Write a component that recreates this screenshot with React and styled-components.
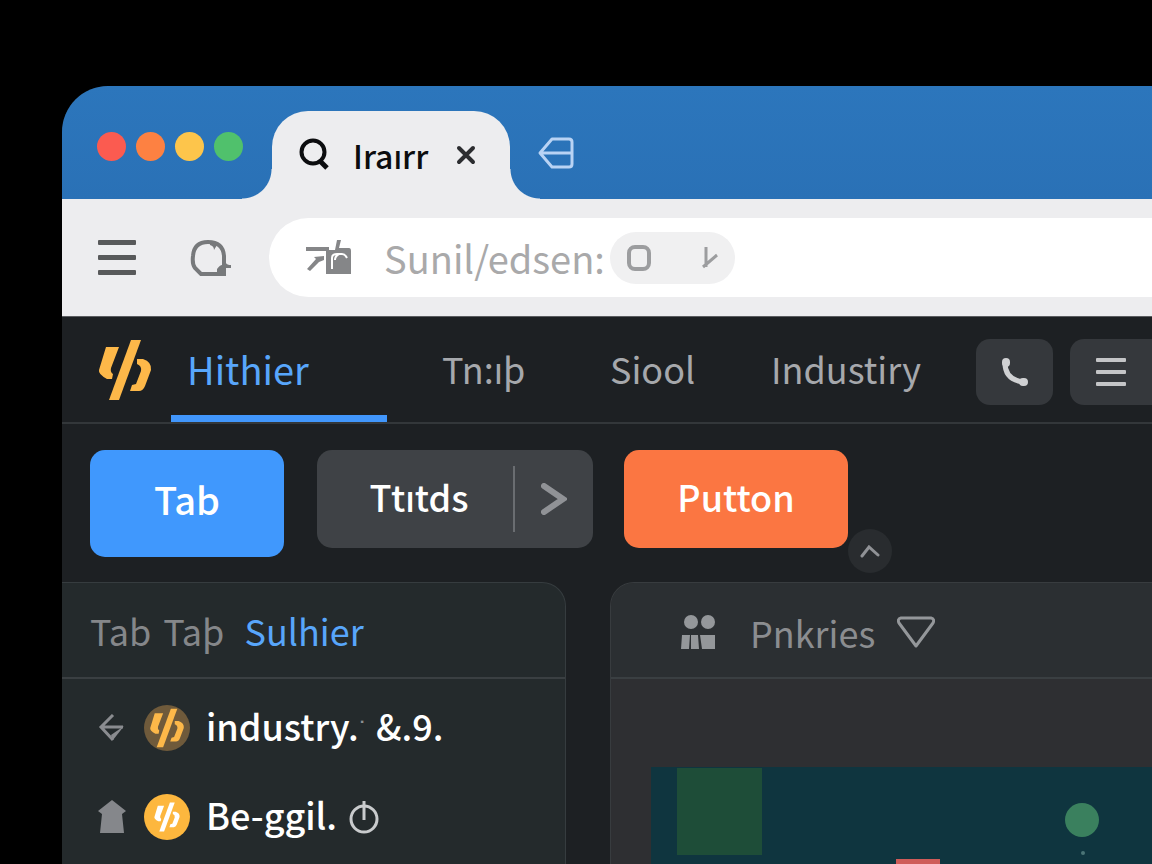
import React from "react";
import styled, { createGlobalStyle } from "styled-components";

const GlobalStyle = createGlobalStyle`
  * {
    box-sizing: border-box;
  }
  body {
    margin: 0;
    background: #000;
    font-family: "Noto Sans CJK JP", "Noto Sans", sans-serif;
    overflow-x: hidden;
  }
  button, input, a {
    font-family: inherit;
    color: inherit;
  }
  button {
    border: 0;
    padding: 0;
    background: none;
    cursor: pointer;
  }
  a {
    text-decoration: none;
  }
  svg {
    display: block;
    flex-shrink: 0;
  }
`;

const Page = styled.div`
  display: flex;
  min-height: 100vh;
  padding: 86px 0 0 62px;
  background: #000;
`;
const Window = styled.div`
  display: flex;
  flex: 1;
  flex-direction: column;
  min-width: 0;
  overflow: hidden;
  border-top-left-radius: 46px;
  background: #1d2023;
`;

/* title bar */
const TitleBar = styled.header`
  display: flex;
  align-items: center;
  height: 113px;
  padding: 25px 0 0 35px;
  background: linear-gradient(#2c76bc, #2a71b6);
`;
const Lights = styled.div`
  display: flex;
  gap: 10px;
  padding-bottom: 18px;
  margin-right: 29px;
`;
const Light = styled.span`
  width: 29px;
  height: 29px;
  border-radius: 50%;
  background: ${(props) => props.$color};
`;
const BrowserTab = styled.div`
  position: relative;
  display: flex;
  align-items: center;
  align-self: stretch;
  width: 238px;
  padding-left: 27px;
  border-radius: 36px 36px 0 0;
  background: #ededef;
  color: #0c0d0f;
  &::before,
  &::after {
    content: "";
    position: absolute;
    bottom: 0;
    width: 30px;
    height: 30px;
  }
  &::before {
    right: 100%;
    background: radial-gradient(circle at 0 0, transparent 29px, #ededef 30px);
  }
  &::after {
    left: 100%;
    background: radial-gradient(circle at 100% 0, transparent 29px, #ededef 30px);
  }
`;
const TabTitle = styled.span`
  width: 126px;
  padding-left: 23px;
  font-size: 32px;
  font-weight: 500;
  line-height: 40px;
`;
const NewTab = styled.button`
  margin-left: 28px;
  padding-bottom: 4px;
`;

/* address row */
const AddressRow = styled.div`
  display: flex;
  align-items: center;
  height: 118px;
  padding-left: 36px;
  border-bottom: 1px solid #5b5d60;
  background: #ededef;
`;
const ReloadButton = styled.button`
  margin: 0 38px 0 54px;
`;
const AddressBar = styled.div`
  display: flex;
  flex: 1;
  align-items: center;
  min-width: 0;
  height: 79px;
  padding-left: 37px;
  border-radius: 40px 0 0 40px;
  background: #fff;
`;
const AddressInput = styled.input`
  width: 226px;
  height: 60px;
  padding: 0;
  margin-left: 32px;
  border: 0;
  outline: 0;
  background: none;
  color: #a9a9aa;
  font-size: 38px;
`;
const Chip = styled.div`
  display: flex;
  align-items: center;
  justify-content: space-between;
  width: 125px;
  height: 52px;
  padding: 0 17px;
  border-radius: 26px;
  background: #f0f0f1;
`;

/* main navigation */
const NavBar = styled.nav`
  display: flex;
  align-items: center;
  height: 107px;
  padding-left: 36px;
  border-bottom: 2px solid #33373a;
  background: #1d2023;
`;
const NavLink = styled.a`
  display: flex;
  align-items: center;
  align-self: stretch;
  width: ${(props) => props.$width}px;
  padding: 4px 0 0 16px;
  margin: ${(props) => (props.$active ? "0 39px 0 19px" : 0)};
  border-bottom: 7px solid ${(props) => (props.$active ? "#4196fb" : "transparent")};
  color: ${(props) => (props.$active ? "#58a6fb" : "#a6a8ac")};
  font-size: ${(props) => (props.$active ? 38 : 36)}px;
  white-space: nowrap;
`;
const NavTools = styled.div`
  display: flex;
  gap: 17px;
  padding-top: 4px;
  margin-left: auto;
`;
const ToolButton = styled.button`
  display: flex;
  align-items: center;
  justify-content: center;
  width: ${(props) => (props.$edge ? 82 : 77)}px;
  height: 66px;
  border-radius: ${(props) => (props.$edge ? "14px 0 0 14px" : "14px")};
  background: #35383c;
`;

/* actions */
const Actions = styled.div`
  display: flex;
  align-items: flex-start;
  height: 158px;
  padding: 26px 0 0 28px;
`;
const Button = styled.button`
  width: ${(props) => props.$width}px;
  height: ${(props) => (props.$tall ? 107 : 98)}px;
  padding-bottom: ${(props) => (props.$tall ? 10 : 6)}px;
  border-radius: 15px;
  background: ${(props) => props.$color};
  color: #fff;
  font-size: ${(props) => (props.$tall ? 38 : 36)}px;
  font-weight: 500;
`;
const SplitButton = styled.div`
  display: flex;
  align-items: center;
  padding-left: 8px;
  margin: 0 31px 0 33px;
  border-radius: 15px;
  background: #3f4246;
`;
const SplitToggle = styled.button`
  display: flex;
  align-items: center;
  justify-content: center;
  width: 80px;
  height: 66px;
  border-left: 2px solid #6a6d71;
`;
const ButtonWrap = styled.div`
  position: relative;
`;
const ScrollUp = styled.button`
  position: absolute;
  right: -44px;
  bottom: -25px;
  display: flex;
  align-items: center;
  justify-content: center;
  width: 44px;
  height: 44px;
  border-radius: 50%;
  background: #292c2f;
`;

/* panels */
const Panels = styled.main`
  display: flex;
  flex: 1;
  gap: 44px;
`;
const SidePanel = styled.section`
  width: 504px;
  border: 1px solid #363c3f;
  border-width: 1px 1px 0 0;
  border-top-right-radius: 24px;
  background: #242a2c;
`;
const MainPanel = styled.section`
  display: flex;
  flex: 1;
  flex-direction: column;
  min-width: 0;
  border: 1px solid #383c3f;
  border-width: 1px 0 0 1px;
  border-top-left-radius: 24px;
  background: #2e2f32;
  overflow: hidden;
`;
const PanelHeader = styled.div`
  display: flex;
  align-items: center;
  height: 96px;
  padding: ${(props) => (props.$wide ? "4px 0 0 70px" : "0 0 0 28px")};
  border-bottom: 2px solid #3a3f42;
  background: ${(props) => (props.$wide ? "#2b2f32" : "none")};
  font-size: 36px;
  line-height: 48px;
`;
const HeaderLink = styled.a`
  margin-right: ${(props) => props.$gap || 0}px;
  color: ${(props) => (props.$active ? "#58a6fb" : "#85878a")};
`;
const HeaderTitle = styled.h2`
  width: 121px;
  margin: 0 26px 0 34px;
  color: #8b8d90;
  font-size: 36px;
  font-weight: 400;
  line-height: 48px;
`;
const List = styled.ul`
  margin: 0;
  padding: 4px 0 0 36px;
  list-style: none;
`;
const Item = styled.li`
  display: flex;
  align-items: center;
  height: 89px;
  color: #fff;
  font-size: 36px;
  font-weight: 500;
  white-space: nowrap;
`;
const Badge = styled.span`
  display: flex;
  align-items: center;
  justify-content: center;
  width: 46px;
  height: 46px;
  margin: 0 16px 0 18px;
  border-radius: 50%;
  background: ${(props) => (props.$dim ? "#6f5a3b" : "#fdb73e")};
`;
const ItemLabel = styled.span`
  padding-bottom: 6px;
  margin-right: 12px;
`;
const Dot = styled.span`
  color: #8b8f91;
  font-family: "Liberation Sans", sans-serif;
  font-size: 28px;
`;
const Canvas = styled.div`
  flex: 1;
  margin: 88px 0 0 40px;
  background: #0f353f;
  overflow: hidden;
`;

const Logo = ({ width, height, color = "#fdb849" }) => (
  <svg width={width} height={height} viewBox="0 0 54 62" fill={color}>
    <path d="M8 8h13L13 29q-1 4 2 6l-1 5H9Q0 35 1 31Z" />
    <path d="M33 1h10L21 61H11Z" />
    <path d="M39 20h6q9 3 8 11l-6 16q-2 5-6 5h-9l2-6 4-1 5-13q1-5-4-7Z" />
  </svg>
);

const Bars = ({ width, height, thick, color }) => (
  <svg width={width} height={height} fill={color}>
    <rect width={width} height={thick} rx="1" />
    <rect y={(height - thick) / 2} width={width} height={thick} rx="1" />
    <rect y={height - thick} width={width} height={thick} rx="1" />
  </svg>
);

const App = () => {
  return (
    <Page>
      <GlobalStyle />
      <Window>
        <TitleBar>
          <Lights>
            <Light $color="#fb5b50" />
            <Light $color="#fd8142" />
            <Light $color="#fdc54b" />
            <Light $color="#50c16c" />
          </Lights>
          <BrowserTab>
            <svg width="31" height="34" viewBox="0 0 31 34" fill="none" stroke="#0c0d0f">
              <circle cx="14" cy="14" r="11.5" strokeWidth="4" />
              <path d="M20 22l8 8" strokeWidth="5" />
            </svg>
            <TabTitle>Iraırr</TabTitle>
            <button aria-label="Close tab">
              <svg width="20" height="20" viewBox="0 0 20 20" stroke="#2c2d30" strokeWidth="4" strokeLinecap="round">
                <path d="M3 3l14 14M17 3L3 17" />
              </svg>
            </button>
          </BrowserTab>
          <NewTab aria-label="New tab">
            <svg width="37" height="32" viewBox="0 0 37 32" fill="none" stroke="#b9d3f4" strokeWidth="3" strokeLinejoin="round">
              <path d="M14 2h17q3 0 3 3v22q0 3-3 3H14L2 16ZM2 16h32" />
            </svg>
          </NewTab>
        </TitleBar>

        <AddressRow>
          <button aria-label="Menu">
            <Bars width={38} height={35} thick={5} color="#58595a" />
          </button>
          <ReloadButton aria-label="Reload">
            <svg width="41" height="38" viewBox="0 0 41 38" fill="none" stroke="#77797b" strokeWidth="4">
              <path d="M36 35H11L5 29Q2 25 3 17Q4 3 18 3Q33 3 34 17V27" />
              <path d="M27 30q3-4 5-4l4-2q1 2 5 2v3h-5v4h-9Z" fill="#77797b" stroke="none" />
              <path d="M20 4l7 2-3 5q0-4-4-5Z" fill="#77797b" stroke="none" />
            </svg>
          </ReloadButton>
          <AddressBar>
            <svg width="46" height="36" viewBox="0 0 46 36" fill="#858688">
              <path d="M0 7h23v4H0ZM8 17l10-1v4l-5 2-9 9-3-2 9-10ZM31 0h4l-2 8h10q2 0 2 3v23H20V10h9Z" />
              <path d="M26 29V18q0-4 5-4h5q3 0 5 4M33 14q-4 2-4 6" fill="none" stroke="#fff" strokeWidth="2" />
            </svg>
            <AddressInput aria-label="Address" defaultValue="Sunil/edsen:" />
            <Chip>
              <svg width="24" height="26" viewBox="0 0 24 26" fill="none" stroke="#9c9d9f" strokeWidth="4">
                <rect x="2" y="2" width="20" height="22" rx="6" />
              </svg>
              <svg width="16" height="24" viewBox="0 0 16 24" fill="none" stroke="#9c9d9f" strokeWidth="3">
                <path d="M4 1v20M1 21L15 9" />
              </svg>
            </Chip>
          </AddressBar>
        </AddressRow>

        <NavBar>
          <Logo width={54} height={62} />
          <NavLink href="#hithier" $width={216} $active>
            Hithier
          </NavLink>
          <NavLink href="#tnip" $width={168}>
            Tn:ıþ
          </NavLink>
          <NavLink href="#siool" $width={161}>
            Siool
          </NavLink>
          <NavLink href="#industiry" $width={170}>
            Industiry
          </NavLink>
          <NavTools>
            <ToolButton aria-label="Call">
              <svg width="28" height="28" viewBox="0 0 28 28" fill="none" stroke="#d0d1d3" strokeLinecap="round">
                <path d="M4 5Q4 22 23 24" strokeWidth="5" />
                <path d="M5 4v1M22 24h1" strokeWidth="8" />
              </svg>
            </ToolButton>
            <ToolButton aria-label="More" $edge>
              <Bars width={30} height={28} thick={4} color="#c4c5c7" />
            </ToolButton>
          </NavTools>
        </NavBar>

        <Actions>
          <Button $tall $width={194} $color="#4098fd">
            Tab
          </Button>
          <SplitButton>
            <Button $width={188} $color="none">
              Ttıtds
            </Button>
            <SplitToggle aria-label="Show more">
              <svg width="26" height="32" viewBox="0 0 26 32" fill="none" stroke="#909296" strokeWidth="6" strokeLinecap="round">
                <path d="M3 3L22 16L3 29" />
              </svg>
            </SplitToggle>
          </SplitButton>
          <ButtonWrap>
            <Button $width={224} $color="#fb7642">
              Putton
            </Button>
            <ScrollUp aria-label="Scroll up">
              <svg width="20" height="13" viewBox="0 0 20 13" fill="none" stroke="#909296" strokeWidth="3" strokeLinecap="round">
                <path d="M2 11L9 2L18 10" />
              </svg>
            </ScrollUp>
          </ButtonWrap>
        </Actions>

        <Panels>
          <SidePanel>
            <PanelHeader>
              <HeaderLink href="#tab" $gap={12}>
                Tab
              </HeaderLink>
              <HeaderLink href="#tap" $gap={20}>
                Taþ
              </HeaderLink>
              <HeaderLink href="#sulhier" $active>
                Sulhier
              </HeaderLink>
            </PanelHeader>
            <List>
              <Item>
                <svg width="28" height="28" viewBox="0 0 28 28" fill="none" stroke="#8a8c90" strokeWidth="3">
                  <path d="M15 1L3 13L15 26M3 13h22" />
                  <path d="M26 12L15 26l-2-5Z" fill="#8a8c90" stroke="none" />
                </svg>
                <Badge $dim>
                  <Logo width={38} height={40} />
                </Badge>
                <ItemLabel>
                  industry.<Dot>˙</Dot> &amp;.9.
                </ItemLabel>
              </Item>
              <Item>
                <svg width="28" height="34" viewBox="0 0 28 34" fill="#85878b">
                  <path d="M14 0L28 11l-4 3 2 19H2L4 14 0 11Z" />
                </svg>
                <Badge>
                  <Logo width={28} height={30} color="#fff" />
                </Badge>
                <ItemLabel>Be-ggil.</ItemLabel>
                <svg width="30" height="34" viewBox="0 0 30 34" fill="none" stroke="#c9cbcd" strokeWidth="3">
                  <circle cx="15" cy="19" r="13" />
                  <path d="M15 1v19" />
                </svg>
              </Item>
            </List>
          </SidePanel>

          <MainPanel>
            <PanelHeader $wide>
              <svg width="35" height="34" viewBox="0 0 35 34" fill="#94979a">
                <circle cx="10" cy="7" r="7" />
                <circle cx="27" cy="7" r="7" />
                <path d="M1 20h8l-1 14H0ZM10 20h7l1 14H10ZM19 20h15v14H21Z" />
              </svg>
              <HeaderTitle>Pnkries</HeaderTitle>
              <svg width="38" height="32" viewBox="0 0 38 32" fill="none" stroke="#94979a" strokeWidth="3" strokeLinejoin="round">
                <path d="M4 2h30q4 1 2 5L19 30L2 7Q0 3 4 2Z" />
              </svg>
            </PanelHeader>
            <Canvas>
              <svg width="501" height="97" viewBox="0 0 501 97">
                <rect x="26" y="1" width="85" height="87" fill="#1e4d38" />
                <ellipse cx="431" cy="53" rx="17" ry="17" fill="#3a805e" />
                <circle cx="432" cy="86" r="2" fill="#4b7476" />
                <rect x="245" y="92" width="44" height="5" fill="#cf5c59" />
              </svg>
            </Canvas>
          </MainPanel>
        </Panels>
      </Window>
    </Page>
  );
};

export default App;
